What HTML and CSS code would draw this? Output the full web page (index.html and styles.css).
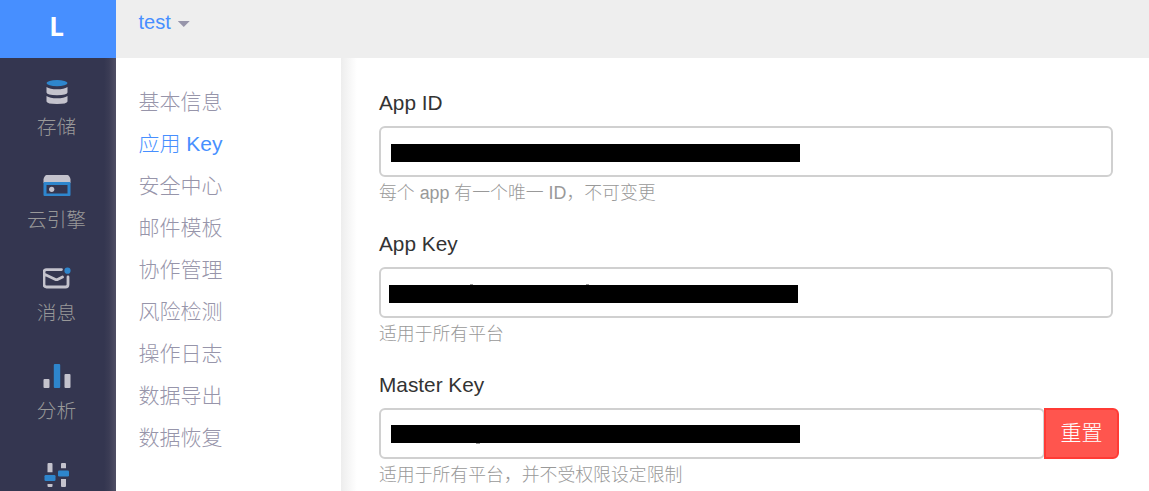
FILE: index.html
```html
<!DOCTYPE html>
<html lang="zh-CN">
<head>
<meta charset="utf-8">
<title>应用 Key</title>
<link rel="stylesheet" href="styles.css">
</head>
<body>
<div class="app">
  <aside class="sidebar">
    <div class="logo">L</div>
    <nav class="modules">
      <a class="module">
        <svg class="icon" width="28" height="24" viewBox="0 0 28 24">
          <path class="light" d="M3.500 7Q7 9.300 14 9.300T24.500 7V12.500Q24 15.300 14 15.300T3.500 12.500ZM3.500 16Q7 18.300 14 18.300T24.500 16V21.500Q24 24 14 24T3.500 21.500Z"/>
          <ellipse class="blue" cx="14" cy="3.100" rx="10.500" ry="3.100"/>
        </svg>
        <span>存储</span>
      </a>
      <a class="module">
        <svg class="icon" width="28" height="24" viewBox="0 0 28 24">
          <path class="light" d="M3.500 2H24.500Q26 2 27.500 6V10H.5V6Q2 2 3.500 2Z"/>
          <rect class="blue" x=".5" y="9" width="27" height="14" rx="1"/>
          <rect class="hole" x="3.500" y="12" width="21" height="8.500"/>
          <circle class="light" cx="8.700" cy="16.300" r="2.600"/>
        </svg>
        <span>云引擎</span>
      </a>
      <a class="module">
        <svg class="icon" width="28" height="24" viewBox="0 0 28 24">
          <path class="stroke" d="M18.500 3.600H3.500Q1 3.600 1 6V18.500Q1 21 3.500 21H22.500Q25 21 25 18.500V11M2 8.500L12 13.200Q13.500 14 15 13.200L19.500 11"/>
          <circle class="blue" cx="24.500" cy="4.700" r="3.100"/>
        </svg>
        <span>消息</span>
      </a>
      <a class="module tall">
        <svg class="icon" width="28" height="24" viewBox="0 0 28 24">
          <rect class="light" x=".5" y="15" width="6" height="9" rx="1"/>
          <rect class="blue" x="10.800" y="0" width="6.400" height="24" rx="1"/>
          <rect class="light" x="21.500" y="10" width="6" height="14" rx="1"/>
        </svg>
        <span>分析</span>
      </a>
      <a class="module tall">
        <svg class="icon" width="28" height="24" viewBox="0 0 28 24">
          <path class="light" d="M5.500 0h3q1 0 1 1v8.200h-5V1q0-1 1-1zM4.500 21h5v2q0 1-1 1h-3q-1 0-1-1zM19 0h3q1 0 1 1v4.200h-5V1q0-1 1-1zM18 16h5v7q0 1-1 1h-3q-1 0-1-1z"/>
          <rect class="blue" x="1.500" y="12" width="11" height="6" rx="1.300"/>
          <rect class="blue" x="15" y="7.600" width="11" height="6" rx="1.300"/>
        </svg>
      </a>
    </nav>
  </aside>
  <div class="page">
    <header class="topbar"><span>test</span><i class="caret"></i></header>
    <div class="body">
      <nav class="menu">
        <a>基本信息</a>
        <a class="active">应用 Key</a>
        <a>安全中心</a>
        <a>邮件模板</a>
        <a>协作管理</a>
        <a>风险检测</a>
        <a>操作日志</a>
        <a>数据导出</a>
        <a>数据恢复</a>
      </nav>
      <main class="content">
        <section class="field">
          <label>App ID</label>
          <div class="row"><div class="input"><span class="redacted"></span></div></div>
          <p class="help">每个 app 有一个唯一 ID，不可变更</p>
        </section>
        <section class="field">
          <label>App Key</label>
          <div class="row"><div class="input shifted"><span class="redacted tips-above"></span></div></div>
          <p class="help">适用于所有平台</p>
        </section>
        <section class="field">
          <label>Master Key</label>
          <div class="row with-button"><div class="input raised"><span class="redacted tip-below"></span></div><button class="reset">重置</button></div>
          <p class="help">适用于所有平台，并不受权限设定限制</p>
        </section>
      </main>
    </div>
  </div>
</div>
</body>
</html>
```
FILE: styles.css
```css
* { box-sizing: border-box; }
body {
  margin: 0;
  font-family: "Liberation Sans", "Noto Sans CJK SC", sans-serif;
  font-weight: 300;
  font-size: 21px;
  background: #fff;
}
.app { display: flex; height: 491px; overflow: hidden; }
.sidebar {
  width: 116px;
  flex: none;
  color: #999;
  background: linear-gradient(to right, #343650 104px, #3b3c55 109px, #504f65 116px);
}
.logo {
  height: 58px;
  padding-right: 3px;
  background: #478fff;
  color: #fff;
  font: bold 26px/52px "Open Sans", sans-serif;
  text-align: center;
}
.modules { padding: 22px 3px 0 0; }
.module {
  display: flex;
  flex-direction: column;
  align-items: center;
  height: 93px;
  font-size: 19.700px;
  line-height: 30px;
}
.module span { margin-top: 8px; }
.modules .tall { height: 99px; padding-top: 5px; }
.icon { flex: none; display: block; }
.light { fill: #c4c3cd; }
.blue { fill: #2e86cd; }
.hole { fill: #343650; }
.stroke { fill: none; stroke: #c4c3cd; stroke-width: 2.800; stroke-linecap: round; stroke-linejoin: round; }
.page { flex: 1; min-width: 0; }
.topbar {
  display: flex;
  height: 58px;
  padding-left: 22.500px;
  background: #eee;
  color: #478fff;
  font-size: 20px;
  line-height: 45px;
}
.caret {
  width: 12px;
  height: 6px;
  margin: 21px 0 0 7px;
  background: #9795aa;
  clip-path: polygon(0 0, 100% 0, 50% 100%);
}
.body { display: flex; height: 433px; }
.menu {
  display: flex;
  flex-direction: column;
  flex: none;
  width: 225px;
  padding: 23px 0 0 22.500px;
  color: #9795aa;
}
.menu a { height: 42px; line-height: 42px; }
.menu .active { color: #478fff; }
.content {
  flex: 1;
  padding: 30px 36px 0 38px;
  background: linear-gradient(to right, #ededed, #fff 16px);
}
.field { height: 141px; }
.field label { display: block; height: 38px; font-size: 20.800px; line-height: 29px; color: #333; }
.row { display: flex; }
.with-button { margin-right: -6px; }
.input {
  display: flex;
  align-items: center;
  flex: 1;
  height: 51px;
  padding: 3px 0 0 10px;
  border: 2px solid #d0d0d0;
  border-radius: 6px;
  background: #fff;
}
.shifted { padding-left: 8px; }
.raised { padding-top: 1px; margin-right: -1px; }
.redacted { position: relative; width: 409px; height: 18px; background: #000; }
.tips-above::before {
  content: "";
  position: absolute;
  top: -1px;
  left: 81px;
  width: 3px;
  height: 1px;
  background: #999;
  box-shadow: 116px 0 #999;
}
.tip-below::before {
  content: "";
  position: absolute;
  bottom: -1px;
  left: 85px;
  width: 4px;
  height: 1px;
  background: #999;
}
.reset {
  width: 75px;
  height: 51px;
  padding: 0 0 5px;
  border: 2px solid #ff3b35;
  border-radius: 0 6px 6px 0;
  background: #ff554e;
  color: #fff;
  font: inherit;
}
.help { margin: 0; font-size: 17.850px; line-height: 33px; color: #999; }
```
